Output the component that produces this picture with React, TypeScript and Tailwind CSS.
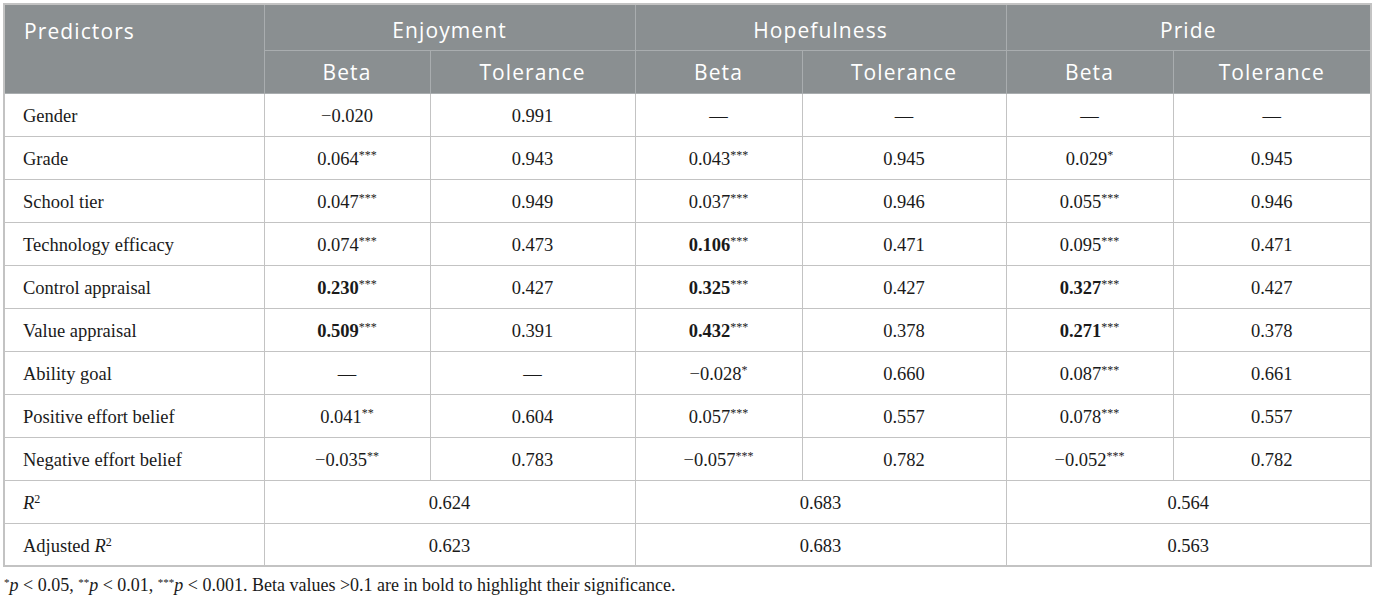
import React from "react";

type Cell = { v: string; s?: string; b?: boolean };

const rows: { label: React.ReactNode; cells: Cell[] }[] = [
  { label: "Gender", cells: [{ v: "\u22120.020" }, { v: "0.991" }, { v: "\u2014" }, { v: "\u2014" }, { v: "\u2014" }, { v: "\u2014" }] },
  { label: "Grade", cells: [{ v: "0.064", s: "***" }, { v: "0.943" }, { v: "0.043", s: "***" }, { v: "0.945" }, { v: "0.029", s: "*" }, { v: "0.945" }] },
  { label: "School tier", cells: [{ v: "0.047", s: "***" }, { v: "0.949" }, { v: "0.037", s: "***" }, { v: "0.946" }, { v: "0.055", s: "***" }, { v: "0.946" }] },
  { label: "Technology efficacy", cells: [{ v: "0.074", s: "***" }, { v: "0.473" }, { v: "0.106", s: "***", b: true }, { v: "0.471" }, { v: "0.095", s: "***" }, { v: "0.471" }] },
  { label: "Control appraisal", cells: [{ v: "0.230", s: "***", b: true }, { v: "0.427" }, { v: "0.325", s: "***", b: true }, { v: "0.427" }, { v: "0.327", s: "***", b: true }, { v: "0.427" }] },
  { label: "Value appraisal", cells: [{ v: "0.509", s: "***", b: true }, { v: "0.391" }, { v: "0.432", s: "***", b: true }, { v: "0.378" }, { v: "0.271", s: "***", b: true }, { v: "0.378" }] },
  { label: "Ability goal", cells: [{ v: "\u2014" }, { v: "\u2014" }, { v: "\u22120.028", s: "*" }, { v: "0.660" }, { v: "0.087", s: "***" }, { v: "0.661" }] },
  { label: "Positive effort belief", cells: [{ v: "0.041", s: "**" }, { v: "0.604" }, { v: "0.057", s: "***" }, { v: "0.557" }, { v: "0.078", s: "***" }, { v: "0.557" }] },
  { label: "Negative effort belief", cells: [{ v: "\u22120.035", s: "**" }, { v: "0.783" }, { v: "\u22120.057", s: "***" }, { v: "0.782" }, { v: "\u22120.052", s: "***" }, { v: "0.782" }] },
];

const serif = "font-['Liberation_Serif',serif]";
const sans = "font-['Open_Sans',sans-serif]";

function Val({ c }: { c: Cell }) {
  return (
    <span className={c.b ? "font-bold" : ""}>
      {c.v}
      {c.s && <sup className="text-[12px] font-normal">{c.s}</sup>}
    </span>
  );
}

export default function App() {
  const th = `border border-[#a9adaf] font-normal text-white text-[21px] tracking-[1.1px] ${sans} p-0`;
  const td = `border border-[#c3c3c3] text-[18.5px] text-[#1a1a1a] ${serif} text-center p-0 pt-[3px] h-[43px] leading-none`;
  return (
    <div className="bg-white w-[1375px] h-[599px] pt-[3px] pl-[3px]">
      <table className="border-collapse border-2 border-[#c3c3c3] w-[1367px] table-fixed">
        <colgroup>
          <col className="w-[260px]" />
          <col className="w-[166px]" />
          <col className="w-[205px]" />
          <col className="w-[167px]" />
          <col className="w-[204px]" />
          <col className="w-[167px]" />
          <col className="w-[198px]" />
        </colgroup>
        <thead className="bg-[#8a8f91]">
          <tr className="h-[46px]">
            <th rowSpan={2} className={`${th} text-left align-top pl-[19px] pt-[11px] border-t-[#c3c3c3] border-l-[#c3c3c3]`}>Predictors</th>
            <th colSpan={2} className={`${th} pt-[7px] border-t-[#c3c3c3]`}>Enjoyment</th>
            <th colSpan={2} className={`${th} pt-[7px] border-t-[#c3c3c3]`}>Hopefulness</th>
            <th colSpan={2} className={`${th} pt-[7px] border-t-[#c3c3c3] border-r-[#c3c3c3]`}>Pride</th>
          </tr>
          <tr className="h-[43px]">
            <th className={`${th} pt-[3px]`}>Beta</th>
            <th className={`${th} pt-[3px]`}>Tolerance</th>
            <th className={`${th} pt-[3px]`}>Beta</th>
            <th className={`${th} pt-[3px]`}>Tolerance</th>
            <th className={`${th} pt-[3px]`}>Beta</th>
            <th className={`${th} pt-[3px] border-r-[#c3c3c3]`}>Tolerance</th>
          </tr>
        </thead>
        <tbody>
          {rows.map((r, i) => (
            <tr key={i}>
              <td className={`${td} text-left pl-[18px]`}>{r.label}</td>
              {r.cells.map((c, j) => (
                <td key={j} className={td}>
                  <Val c={c} />
                </td>
              ))}
            </tr>
          ))}
          <tr>
            <td className={`${td} text-left pl-[18px]`}>
              <i>R</i>
              <sup className="text-[12px]">2</sup>
            </td>
            <td colSpan={2} className={td}>0.624</td>
            <td colSpan={2} className={td}>0.683</td>
            <td colSpan={2} className={td}>0.564</td>
          </tr>
          <tr>
            <td className={`${td} text-left pl-[18px]`}>
              Adjusted <i>R</i>
              <sup className="text-[12px]">2</sup>
            </td>
            <td colSpan={2} className={td}>0.623</td>
            <td colSpan={2} className={td}>0.683</td>
            <td colSpan={2} className={td}>0.563</td>
          </tr>
        </tbody>
      </table>
      <p className={`${serif} text-[18px] text-[#1a1a1a] mt-[9px] pl-[1px] leading-none`}>
        <sup className="text-[11px]">*</sup>
        <i>p</i> &lt; 0.05, <sup className="text-[11px]">**</sup>
        <i>p</i> &lt; 0.01, <sup className="text-[11px]">***</sup>
        <i>p</i> &lt; 0.001. Beta values &gt;0.1 are in bold to highlight their significance.
      </p>
    </div>
  );
}
